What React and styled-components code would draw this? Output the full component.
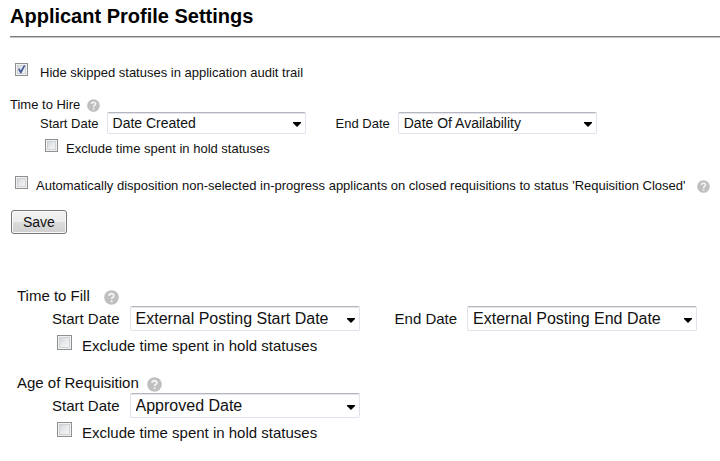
import React, { useId } from "react";
import styled, { createGlobalStyle, ThemeProvider } from "styled-components";

const GlobalStyle = createGlobalStyle`
  *, *::before, *::after { box-sizing: border-box; }
  body {
    margin: 0;
    background: #fff;
    color: #111;
    font-family: "Liberation Sans", Arial, Helvetica, sans-serif;
  }
`;

const compact = {
  label: 13, value: 14, titleLine: 15, selectHeight: 22, selectWidth: 199,
  indent: 30, gap: 8, endGap: 30, box: 13, boxLine: 19, boxIndent: 35,
  boxTop: 5, boxGap: 8, icon: 13, iconGap: 7, titleMin: 0,
};

const roomy = {
  label: 15, value: 16, titleLine: 20, selectHeight: 25, selectWidth: 230,
  indent: 35, gap: 10, endGap: 35, box: 15, boxLine: 22, boxIndent: 40,
  boxTop: 4, boxGap: 10, icon: 15, iconGap: 8, titleMin: 79,
};

const Page = styled.main`
  padding-left: 10px;
`;

const Header = styled.header`
  padding: 4px 0 8px;
  border-bottom: 1px solid #7c7c7c;
  box-shadow: 0 1px 0 #c4c4c4;
`;

const PageTitle = styled.h1`
  margin: 0;
  color: #000;
  font-size: 20px;
  font-weight: bold;
  line-height: 24px;
`;

const Form = styled.form`
  margin: 0;
`;

const Group = styled.fieldset`
  min-width: 0;
  margin: ${(p) => p.$top}px 0 0;
  padding: 0;
  border: 0;
`;

const RoomySection = styled.section`
  margin-top: 52px;
  padding-left: 7px;
`;

const GroupHeading = styled.div`
  display: flex;
  align-items: center;
  gap: ${(p) => p.theme.iconGap}px;
  height: ${(p) => p.theme.titleLine}px;
`;

const GroupTitle = styled.span`
  min-width: ${(p) => p.theme.titleMin}px;
  font-size: ${(p) => p.theme.label}px;
  line-height: ${(p) => p.theme.titleLine}px;
`;

const DateRow = styled.div`
  display: flex;
  align-items: center;
  flex-wrap: wrap;
  column-gap: ${(p) => p.theme.endGap}px;
  padding-left: ${(p) => p.theme.indent}px;
`;

const Field = styled.div`
  display: flex;
  align-items: center;
  gap: ${(p) => p.theme.gap}px;
`;

const FieldLabel = styled.label`
  font-size: ${(p) => p.theme.label}px;
  white-space: nowrap;
`;

const SelectBox = styled.div`
  position: relative;
  width: ${(p) => p.theme.selectWidth}px;
`;

const Select = styled.select`
  display: block;
  width: 100%;
  height: ${(p) => p.theme.selectHeight}px;
  margin: 0;
  padding: 0 20px 0 5px;
  appearance: none;
  border: 1px solid #dfe3ec;
  border-top: 1px solid #b4b6c0;
  border-radius: 2px;
  background: #fff;
  box-shadow: inset 0 1px 0 #e4e4ea;
  color: #111;
  font-family: inherit;
  font-size: ${(p) => p.theme.value}px;
`;

const Arrow = styled.svg`
  position: absolute;
  top: 50%;
  right: 5px;
  width: 8px;
  height: 5px;
  margin-top: -1px;
  fill: #000;
  pointer-events: none;
`;

const CheckRow = styled.div`
  display: flex;
  align-items: flex-start;
  gap: ${(p) => p.$gap}px;
  margin-top: ${(p) => p.$top}px;
  padding-left: ${(p) => p.$indent}px;
`;

const CheckFrame = styled.span`
  position: relative;
  flex: none;
  width: ${(p) => p.theme.box}px;
  height: ${(p) => p.theme.box}px;
`;

const Checkbox = styled.input`
  display: block;
  width: 100%;
  height: 100%;
  margin: 0;
  appearance: none;
  border: 1px solid #8e8f8f;
  background: linear-gradient(135deg, #c8ccd2 0%, #e8eaec 50%, #fafafa 100%);
  box-shadow: inset 0 0 0 1px #f1f1f1, inset 0 0 0 2px #cfd2d7;

  & + svg { display: none; }
  &:checked + svg { display: block; }
`;

const Tick = styled.svg`
  position: absolute;
  inset: 0;
  width: 100%;
  height: 100%;
  fill: #3f5794;
  pointer-events: none;
`;

const CheckLabel = styled.label`
  font-size: ${(p) => p.theme.label}px;
  line-height: ${(p) => p.theme.boxLine}px;
`;

const HelpButton = styled.button`
  display: block;
  flex: none;
  align-self: ${(p) => (p.$end ? "flex-end" : "auto")};
  width: ${(p) => p.theme.icon}px;
  height: ${(p) => p.theme.icon}px;
  margin: ${(p) => (p.$end ? "0 0 2px 3px" : "2px 0 0")};
  padding: 0;
  border: 0;
  background: none;
`;

const HelpIcon = styled.svg`
  display: block;
  width: 100%;
  height: 100%;
`;

const SaveButton = styled.button`
  display: block;
  height: 24px;
  margin: 15px 0 0 1px;
  padding: 0 11px;
  border: 1px solid #777;
  border-radius: 3px;
  background: linear-gradient(#f3f3f3 0%, #ebebeb 50%, #dcdcdc 51%, #cfcfcf 100%);
  box-shadow: inset 0 0 0 1px #f8f8f8;
  color: #111;
  font-family: inherit;
  font-size: 14px;
`;

function Help({ topic, end }) {
  return (
    <HelpButton type="button" aria-label={`Help: ${topic}`} $end={end}>
      <HelpIcon viewBox="0 0 14 14" aria-hidden="true">
        <circle cx="7" cy="7" r="6.8" fill="#bfbfbf" />
        <path
          d="M4.8 5.5C4.8 2.9 9.2 2.9 9.2 5.3C9.2 6.8 7.1 6.8 7.1 8.5"
          fill="none"
          stroke="#f4f4f4"
          strokeWidth="1.7"
        />
        <circle cx="7.1" cy="10.5" r="1" fill="#f4f4f4" />
      </HelpIcon>
    </HelpButton>
  );
}

function DateField({ label, value }) {
  const id = useId();
  return (
    <Field>
      <FieldLabel htmlFor={id}>{label}</FieldLabel>
      <SelectBox>
        <Select id={id} defaultValue={value}>
          <option>{value}</option>
        </Select>
        <Arrow viewBox="0 0 8 5" aria-hidden="true">
          <path d="M0 0H8V1L4 5L0 1Z" />
        </Arrow>
      </SelectBox>
    </Field>
  );
}

function CheckOption({ label, checked = false, top, indent, gap, help }) {
  const id = useId();
  return (
    <CheckRow $top={top} $indent={indent} $gap={gap}>
      <CheckFrame>
        <Checkbox type="checkbox" id={id} defaultChecked={checked} />
        <Tick viewBox="0 0 13 13" aria-hidden="true">
          <path d="M3 6L4.7 5.5L5.8 7.5L8.7 2.5L10.5 2.2L6.4 10.2L5.2 10.2Z" />
        </Tick>
      </CheckFrame>
      <CheckLabel htmlFor={id}>{label}</CheckLabel>
      {help && <Help topic={help} end />}
    </CheckRow>
  );
}

function DateGroup({ title, start, end, scale, top = 0 }) {
  return (
    <ThemeProvider theme={scale}>
      <Group $top={top} aria-label={title}>
        <GroupHeading>
          <GroupTitle>{title}</GroupTitle>
          <Help topic={title} />
        </GroupHeading>
        <DateRow>
          <DateField label="Start Date" value={start} />
          {end && <DateField label="End Date" value={end} />}
        </DateRow>
        <CheckOption
          label="Exclude time spent in hold statuses"
          top={scale.boxTop}
          indent={scale.boxIndent}
          gap={scale.boxGap}
        />
      </Group>
    </ThemeProvider>
  );
}

export default function App() {
  return (
    <ThemeProvider theme={compact}>
      <GlobalStyle />
      <Page>
        <Header>
          <PageTitle>Applicant Profile Settings</PageTitle>
        </Header>
        <Form onSubmit={(e) => e.preventDefault()}>
          <CheckOption
            label="Hide skipped statuses in application audit trail"
            checked
            top={26}
            indent={5}
            gap={12}
          />
          <DateGroup
            title="Time to Hire"
            start="Date Created"
            end="Date Of Availability"
            scale={compact}
            top={15}
          />
          <CheckOption
            label="Automatically disposition non-selected in-progress applicants on closed requisitions to status 'Requisition Closed'"
            top={18}
            indent={5}
            gap={8}
            help="Automatic disposition"
          />
          <SaveButton type="submit">Save</SaveButton>
          <RoomySection>
            <DateGroup
              title="Time to Fill"
              start="External Posting Start Date"
              end="External Posting End Date"
              scale={roomy}
            />
            <DateGroup
              title="Age of Requisition"
              start="Approved Date"
              scale={roomy}
              top={16}
            />
          </RoomySection>
        </Form>
      </Page>
    </ThemeProvider>
  );
}
